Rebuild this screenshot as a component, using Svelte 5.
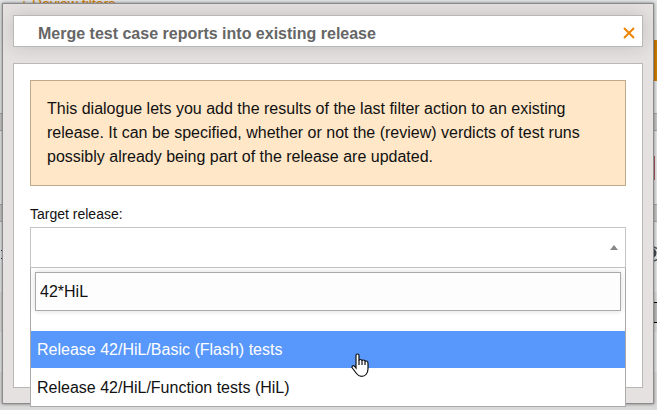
<script lang="ts">
  const releases = [
    'Release 42/HiL/Basic (Flash) tests',
    'Release 42/HiL/Function tests (HiL)',
  ];

  let open = $state(true);
  let target = $state('');
  let query = $state('42*HiL');
  let active = $state(0);

  const matches = $derived.by(() => {
    const parts = query.toLowerCase().split('*').map((p) => p.replace(/[.+?^${}()|[\]\\]/g, '\\$&'));
    const pattern = new RegExp(parts.join('.*'));
    return releases.filter((r) => pattern.test(r.toLowerCase()));
  });
</script>

<div class="page">
  <div class="toolbar">
    <a class="filter-link" href="#filters">+ Review filters</a>
    <div class="action"></div>
  </div>
  <div class="bar"></div>
  <div class="section">
    <div class="verdict"></div>
  </div>
  <div class="bar"></div>
  <div class="row tall">
    <div class="mark"></div>
    <svg class="eye" viewBox="0 0 24 16" width="24" height="16">
      <path d="M1 8Q12-6 23 8Q12 22 1 8Z" fill="none" stroke="#555b60" stroke-width="1.5" />
      <circle cx="12" cy="7" r="4.5" fill="#444b50" />
    </svg>
  </div>
  <div class="row dark">
    <div class="box"></div>
  </div>
  <div class="row"></div>
  <div class="row dark"></div>
</div>

{#if open}
  <div class="dialog" role="dialog" aria-labelledby="dialog-title">
    <header class="dialog-header">
      <h1 id="dialog-title">Merge test case reports into existing release</h1>
      <button class="close" type="button" aria-label="Close" onclick={() => (open = false)}>
        <svg viewBox="0 0 12 12" width="12" height="12">
          <path d="M1 1L11 11M11 1L1 11" fill="none" stroke="#ee8500" stroke-width="2" />
        </svg>
      </button>
    </header>

    <div class="panel">
      <p class="notice">
        This dialogue lets you add the results of the last filter action to an existing release. It
        can be specified, whether or not the (review) verdicts of test runs possibly already being
        part of the release are updated.
      </p>

      <label for="target">Target release:</label>
      <div class="combo">
        <select id="target" bind:value={target}>
          <option value=""></option>
          {#each releases as release}
            <option value={release}>{release}</option>
          {/each}
        </select>
        <span class="arrow"></span>

        <div class="dropdown">
          <input type="text" aria-label="Search release" bind:value={query} />
          <ul role="listbox" aria-label="Releases">
            {#each matches as release, i}
              <li role="option" aria-selected={i === active} class:active={i === active}>
                <button type="button" onmouseenter={() => (active = i)} onclick={() => (target = release)}>
                  {release}
                </button>
              </li>
            {/each}
          </ul>
        </div>
      </div>
    </div>
  </div>

  <svg class="pointer" viewBox="0 0 18 24" width="18" height="24">
    <path
      d="M5 14V2.5Q5 1 6.5 1T8 2.5V7.5Q8.2 6.5 9.5 6.5T11 8Q11.2 7 12.5 7T14 8.7Q14.3 7.8 15.5 8T17 10V16Q17 19 15 21.5Q13.5 23.3 10.5 23.3Q7.5 23.3 5.5 20.5L1.3 15Q.6 13.7 1.5 13T3.5 13.2L5 15Z"
      fill="#fff"
      stroke="#111"
      stroke-width="1.2"
    />
    <path d="M8 7V12M11 8V12M14 9V12" fill="none" stroke="#111" stroke-width="1.2" />
  </svg>
{/if}

<style>
  :global(body) {
    margin: 0;
    font-family: 'Liberation Sans', Arial, sans-serif;
    font-size: 16px;
    color: #111;
    background: #e1e1e1;
  }

  .page {
    display: flex;
    flex-direction: column;
    height: 100vh;
    overflow: hidden;
    background: #e2e4e5;
  }

  .toolbar {
    display: flex;
    flex: none;
    justify-content: space-between;
    height: 113px;
  }

  .filter-link {
    padding-left: 20px;
    font-size: 14px;
    line-height: 9px;
    color: #d98200;
    text-decoration: none;
  }

  .action {
    width: 40px;
    height: 41px;
    margin-top: 40px;
    background: #d07c00;
  }

  .bar {
    box-sizing: border-box;
    flex: none;
    height: 18px;
    background: #c6c6c6;
    border: solid #a5a5a5;
    border-width: 1px 0;
  }

  .section,
  .row {
    display: flex;
    align-items: center;
    justify-content: flex-end;
    flex: none;
    box-sizing: border-box;
  }

  .section {
    height: 73px;
  }

  .verdict {
    width: 6px;
    height: 24px;
    margin-right: 2px;
    background: #b65c5c;
  }

  .row {
    height: 40px;
  }

  .row.tall {
    height: 70px;
    padding-bottom: 6px;
    justify-content: space-between;
  }

  .row.dark {
    background: #dadada;
  }

  .mark {
    width: 2px;
    height: 7px;
    margin-left: 1px;
    border: solid #34424c;
    border-width: 1px 0;
  }

  .eye {
    margin-right: -7px;
  }

  .box {
    width: 20px;
    height: 19px;
    background: #bbb;
    border: solid #000;
    border-width: 1px 0;
  }

  .dialog {
    position: absolute;
    inset: 3px 3px 6px 2px;
    box-sizing: border-box;
    display: flex;
    flex-direction: column;
    gap: 16px;
    padding: 11px 10px 15px;
    background: #e5e1e0;
    border: 1px solid #8c8c8c;
    box-shadow: 0 0 3px rgba(0, 0, 0, 0.5);
  }

  .dialog-header {
    display: flex;
    align-items: center;
    justify-content: space-between;
    box-sizing: border-box;
    height: 32px;
    padding: 0 7px 0 24px;
    background: #fff;
    border: 1px solid #b8b8b8;
    box-shadow: 0 0 18px rgba(0, 0, 0, 0.15);
  }

  h1 {
    margin: 0;
    padding-top: 6px;
    font-size: 16px;
    line-height: 20px;
    color: #666;
  }

  .close {
    display: flex;
    padding: 4px 0 0;
    border: 0;
    background: none;
    cursor: pointer;
  }

  .panel {
    display: flex;
    flex: 1;
    flex-direction: column;
    padding: 16px;
    background: #fff;
    border: 1px solid #b8b8b8;
  }

  .notice {
    margin: 0 0 18px;
    padding: 16px;
    line-height: 24px;
    background: #ffe7c8;
    border: 1px solid #bfaa8c;
  }

  label {
    margin-bottom: 3px;
    font-size: 14px;
    line-height: 20px;
  }

  .combo {
    position: relative;
    display: grid;
    align-items: center;
  }

  .combo > select,
  .arrow {
    grid-area: 1 / 1;
  }

  select {
    width: 100%;
    height: 41px;
    padding: 0 6px;
    font: inherit;
    color: inherit;
    background: #fff;
    border: 1px solid #c4c4c4;
    border-radius: 0;
    appearance: none;
  }

  .arrow {
    justify-self: end;
    margin-right: 8px;
    border: 4px solid transparent;
    border-top: 0;
    border-bottom: 5px solid #888;
    pointer-events: none;
  }

  .dropdown {
    position: absolute;
    top: 100%;
    left: 0;
    right: 0;
    padding-top: 4px;
    background: #fff;
    border: solid #aaa;
    border-width: 0 1px 1px;
  }

  .dropdown input {
    display: block;
    box-sizing: border-box;
    width: calc(100% - 8px);
    height: 39px;
    margin: 0 4px 20px;
    padding: 0 4px;
    font: inherit;
    color: inherit;
    background: #fdfdfd;
    border: 1px solid #aaa;
    box-shadow: 0 0 6px rgba(0, 0, 0, 0.15);
    outline: none;
  }

  ul {
    display: flex;
    flex-direction: column;
    gap: 1px;
    margin: 0;
    padding: 0;
    list-style: none;
  }

  li.active {
    color: #fff;
    background: #5897fb;
  }

  li button {
    display: block;
    width: 100%;
    height: 37px;
    padding: 0 6px;
    font: inherit;
    color: inherit;
    text-align: left;
    background: none;
    border: 0;
    cursor: pointer;
  }

  .pointer {
    position: absolute;
    top: 353px;
    left: 351px;
    pointer-events: none;
  }
</style>
